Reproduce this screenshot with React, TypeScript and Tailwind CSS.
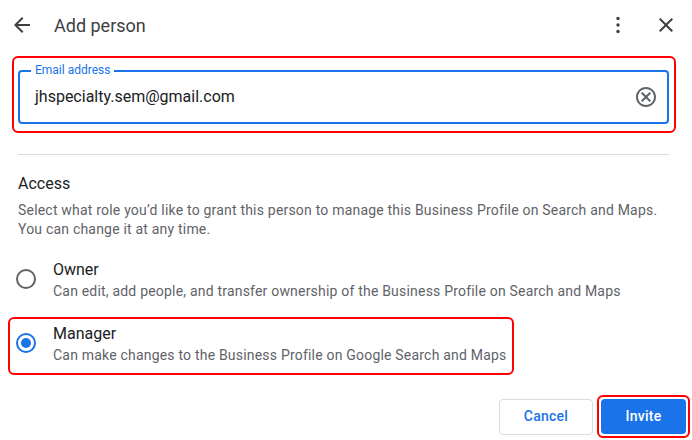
import React from "react";

const Radio = ({ checked }: { checked: boolean }) => (
  <span
    className={`mt-[10px] flex h-[20px] w-[20px] shrink-0 items-center justify-center rounded-full border-2 ${
      checked ? "border-[#1a73e8]" : "border-[#5f6368]"
    }`}
  >
    {checked && <span className="h-[10px] w-[10px] rounded-full bg-[#1a73e8]" />}
  </span>
);

const RoleOption = ({
  title,
  desc,
  checked,
}: {
  title: string;
  desc: string;
  checked: boolean;
}) => (
  <div className="flex items-start gap-[17px]">
    <Radio checked={checked} />
    <div className="flex flex-col">
      <span className="text-[16px] leading-[22px] text-[#202124]">{title}</span>
      <span className="text-[14px] leading-[20px] tracking-[0.2px] text-[#5f6368]">
        {desc}
      </span>
    </div>
  </div>
);

export default function App() {
  return (
    <div className="h-[440px] w-[692px] overflow-hidden bg-white font-['Roboto',sans-serif]">
      {/* header */}
      <div className="flex h-[50px] items-center pl-[10px] pr-[14px]">
        <svg width="24" height="24" viewBox="0 0 24 24" className="fill-[#3c4043]">
          <path d="M20 11H7.83l5.59-5.59L12 4l-8 8 8 8 1.41-1.41L7.83 13H20v-2z" />
        </svg>
        <h1 className="ml-[20px] text-[18px] text-[#3c4043]">Add person</h1>
        <svg width="24" height="24" viewBox="0 0 24 24" className="ml-auto fill-[#3c4043]">
          <circle cx="12" cy="5.5" r="1.7" />
          <circle cx="12" cy="12" r="1.7" />
          <circle cx="12" cy="18.5" r="1.7" />
        </svg>
        <svg width="24" height="24" viewBox="0 0 24 24" className="ml-[24px] fill-[#3c4043]">
          <path d="M19 6.41L17.59 5 12 10.59 6.41 5 5 6.41 10.59 12 5 17.59 6.41 19 12 13.41 17.59 19 19 17.59 13.41 12z" />
        </svg>
      </div>

      {/* email field */}
      <div className="ml-[12px] mt-[6px] w-[664px] rounded-[6px] border-2 border-[#ff0000] pb-[7px] pl-[4px] pr-[5px] pt-[12px]">
        <div className="relative flex h-[54px] items-center rounded-[4px] border-2 border-[#1a73e8] pl-[14px] pr-[9px]">
          <span className="absolute -top-[9px] left-[11px] bg-white px-[4px] text-[12px] leading-[14px] text-[#1a73e8]">
            Email address
          </span>
          <span className="pl-[1px] text-[16px] text-[#202124]">jhspecialty.sem@gmail.com</span>
          <svg width="24" height="24" viewBox="0 0 24 24" className="ml-auto fill-[#5f6368]">
            <path d="M12 2C6.47 2 2 6.47 2 12s4.47 10 10 10 10-4.47 10-10S17.53 2 12 2zm0 18c-4.41 0-8-3.59-8-8s3.59-8 8-8 8 3.59 8 8-3.59 8-8 8zm3.59-13L12 10.59 8.41 7 7 8.41 10.59 12 7 15.59 8.41 17 12 13.41 15.59 17 17 15.59 13.41 12 17 8.41z" />
          </svg>
        </div>
      </div>

      <div className="ml-[18px] mt-[21px] h-px w-[651px] bg-[#dadce0]" />

      {/* access */}
      <div className="px-[18px] pt-[17px]">
        <h2 className="text-[16px] leading-[24px] text-[#202124]">Access</h2>
        <p className="mt-[5px] text-[14px] leading-[19px] tracking-[0.2px] text-[#5f6368]">
          Select what role you’d like to grant this person to manage this Business Profile on Search and Maps.
          <br />
          You can change it at any time.
        </p>
      </div>

      <div className="mt-[20px] pl-[8px]">
        <div className="pl-[8px]">
          <RoleOption
            checked={false}
            title="Owner"
            desc="Can edit, add people, and transfer ownership of the Business Profile on Search and Maps"
          />
        </div>
        <div className="mt-[16px] w-[506px] rounded-[6px] border-2 border-[#ff0000] pb-[8px] pl-[6px] pt-[4px]">
          <RoleOption
            checked={true}
            title="Manager"
            desc="Can make changes to the Business Profile on Google Search and Maps"
          />
        </div>
      </div>

      {/* actions */}
      <div className="mt-[20px] flex items-center justify-end gap-[4px] pr-[2px]">
        <button className="h-[36px] w-[94px] rounded-[4px] border border-[#dadce0] bg-white text-[14px] font-medium tracking-[0.25px] text-[#1a73e8]">
          Cancel
        </button>
        <div className="rounded-[6px] border-2 border-[#ff0000] p-[2px]">
          <button className="h-[35px] w-[85px] rounded-[4px] bg-[#1a73e8] text-[14px] font-medium tracking-[0.25px] text-white">
            Invite
          </button>
        </div>
      </div>
    </div>
  );
}
